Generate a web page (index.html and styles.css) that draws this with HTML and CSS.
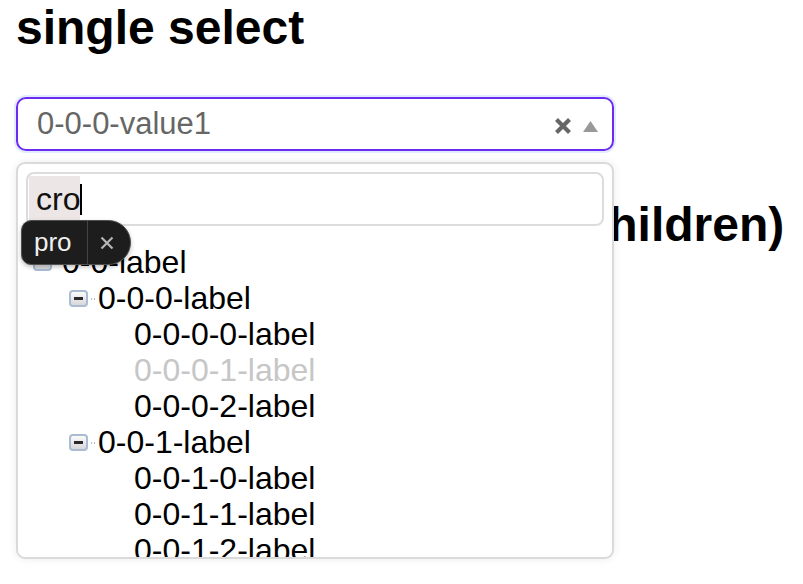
FILE: index.html
```html
<!DOCTYPE html>
<html>
<head>
<meta charset="utf-8">
<link rel="stylesheet" href="styles.css">
</head>
<body>
<h2 class="title">single select</h2>
<div class="select-wrap">
  <div class="select">
    <span class="value">0-0-0-value1</span>
    <span class="icons">
      <svg class="clear" width="18" height="18" viewBox="0 0 18 18"><path d="M2.5 2.5 L15.5 15.5 M15.5 2.5 L2.5 15.5" stroke="#666" stroke-width="4.2" stroke-linecap="butt"/></svg>
      <svg class="arrow" width="15" height="11" viewBox="0 0 15 11"><path d="M7.5 0 L15 11 L0 11 Z" fill="#999"/></svg>
    </span>
  </div>
  <div class="dropdown">
    <div class="search"><span class="compose">cro</span><span class="caret"></span></div>
    <div class="tip"><span class="tip-word">pro</span><span class="tip-close"><svg width="14" height="14" viewBox="0 0 14 14"><path d="M1.5 1.5 L12.5 12.5 M12.5 1.5 L1.5 12.5" stroke="#b5b5b5" stroke-width="2.2"/></svg></span></div>
    <ul class="tree">
      <li class="row lvl0"><span class="sw"></span><span class="conn"></span><span class="label">0-0-label</span></li>
      <li class="row lvl1"><span class="sw"></span><span class="conn"></span><span class="label">0-0-0-label</span></li>
      <li class="row lvl2"><span class="leaf"></span><span class="label">0-0-0-0-label</span></li>
      <li class="row lvl2 disabled"><span class="leaf"></span><span class="label">0-0-0-1-label</span></li>
      <li class="row lvl2"><span class="leaf"></span><span class="label">0-0-0-2-label</span></li>
      <li class="row lvl1"><span class="sw"></span><span class="conn"></span><span class="label">0-0-1-label</span></li>
      <li class="row lvl2"><span class="leaf"></span><span class="label">0-0-1-0-label</span></li>
      <li class="row lvl2"><span class="leaf"></span><span class="label">0-0-1-1-label</span></li>
      <li class="row lvl2"><span class="leaf"></span><span class="label">0-0-1-2-label</span></li>
    </ul>
  </div>
</div>
<h2 class="title">single select (just select children)</h2>
</body>
</html>
```

FILE: styles.css
```css
html, body {
  margin: 0;
  padding: 0;
  background: #fff;
}
html {
  min-height: 584px;
}
body {
  min-height: 584px;
  box-sizing: border-box;
  padding: 0 16px;
  font-family: "Liberation Sans", Arial, sans-serif;
  font-size: 32px;
  color: #000;
}
.title {
  margin: 0 0 42px;
  font-size: 48px;
  font-weight: bold;
  line-height: normal;
  white-space: nowrap;
}
.select-wrap {
  position: relative;
  width: 598px;
  margin-bottom: 46px;
}
.select {
  box-sizing: border-box;
  height: 54px;
  border: 2px solid #6c2bf2;
  border-radius: 10px;
  box-shadow: 0 0 0 2px rgba(170, 200, 255, 0.35);
  display: flex;
  align-items: center;
  padding: 0 14px 0 19px;
}
.value {
  flex: 1;
  font-size: 31px;
  color: #666;
  line-height: 36px;
}
.icons {
  display: flex;
  align-items: center;
  gap: 11px;
  padding-top: 4px;
}
.clear, .arrow {
  display: block;
}
.dropdown {
  position: absolute;
  top: 65px;
  left: 0;
  width: 598px;
  height: 397px;
  box-sizing: border-box;
  border: 2px solid #dadada;
  border-radius: 9px;
  box-shadow: 0 0 8px rgba(0, 0, 0, 0.08);
  background: #fff;
  padding: 8px 8px 0;
  overflow: hidden;
  z-index: 5;
}
.search {
  box-sizing: border-box;
  height: 54px;
  border: 2px solid #dcdcdc;
  border-radius: 8px;
  padding: 2px 1px;
  display: flex;
  align-items: stretch;
}
.compose {
  background: #ece6e6;
  padding: 0 0 0 7px;
  line-height: 46px;
  color: #111;
}
.caret {
  width: 2px;
  background: #000;
  margin: 8px 0 7px;
}
.tip {
  position: absolute;
  left: 3px;
  top: 56px;
  height: 45px;
  width: 110px;
  box-sizing: border-box;
  background: #1d1d1d;
  border: 1px solid #505050;
  border-radius: 11px 24px 24px 11px;
  box-shadow: 0 2px 4px rgba(0, 0, 0, 0.25);
  display: flex;
  align-items: stretch;
  z-index: 6;
}
.tip-word {
  width: 66px;
  box-sizing: border-box;
  padding-left: 12px;
  font-size: 26px;
  line-height: 42px;
  color: #f0f0f0;
  border-right: 1px solid #444;
}
.tip-close {
  flex: 1;
  display: flex;
  align-items: center;
  padding-left: 12px;
}
.tip-close svg {
  display: block;
}
.tree {
  list-style: none;
  margin: 18px 0 0;
  padding: 0 0 0 7px;
}
.row {
  display: flex;
  align-items: center;
  height: 36px;
  line-height: 36px;
  white-space: nowrap;
}
.lvl1 { padding-left: 36px; }
.lvl2 { padding-left: 72px; }
.sw {
  width: 19px;
  height: 17px;
  box-sizing: border-box;
  border: 2px solid #a9bcd4;
  border-radius: 4px;
  background: linear-gradient(#fbfbfb, #d8d8d8);
  position: relative;
  flex: none;
}
.sw::after {
  content: "";
  position: absolute;
  left: 3px;
  right: 3px;
  top: 5px;
  height: 3px;
  background: #2a2a2a;
}
.conn {
  width: 10px;
  height: 2px;
  box-sizing: border-box;
  margin-top: 1px;
  padding: 0 2px;
  background-image: radial-gradient(circle, #bbb 45%, transparent 55%);
  background-size: 3px 2px;
  background-repeat: repeat-x;
  background-origin: content-box;
  background-clip: content-box;
  flex: none;
}
.leaf {
  width: 29px;
  flex: none;
}
.label {
  color: #000;
}
.disabled .label {
  color: #c6c6c6;
}
```
